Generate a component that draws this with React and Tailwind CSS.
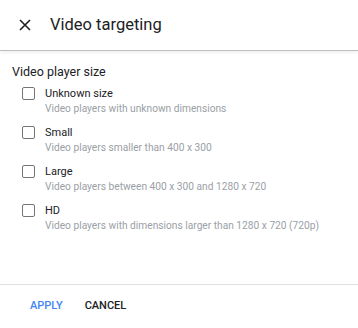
import React from 'react';

const options = [
    { label: 'Unknown size', desc: 'Video players with unknown dimensions' },
    { label: 'Small', desc: 'Video players smaller than 400 x 300' },
    { label: 'Large', desc: 'Video players between 400 x 300 and 1280 x 720' },
    { label: 'HD', desc: 'Video players with dimensions larger than 1280 x 720 (720p)' },
];

const App = () => {
    return (
        <div className="flex flex-col h-[328px] w-[358px] bg-white font-['Roboto',sans-serif] text-[#202124]">
            {/* Header */}
            <div className="flex items-center h-[51px] shrink-0 border-b border-[#bdbdbd] shadow-[0_2px_3px_rgba(0,0,0,0.06)]">
                <svg className="ml-[19px] w-3 h-3" viewBox="0 0 12 12" fill="none" stroke="#202124" strokeWidth="1.6">
                    <path d="M1 1L11 11M11 1L1 11" />
                </svg>
                <h1 className="ml-[19px] text-[16.5px] leading-none">Video targeting</h1>
            </div>

            {/* Body */}
            <div className="flex-1 pt-[13px]">
                <p className="pl-3 text-[12.5px] leading-4">Video player size</p>
                <div className="mt-[6px] flex flex-col gap-[9px] pl-[22px]">
                    {options.map(o => (
                        <div key={o.label} className="flex items-start gap-[10px]">
                            <div className="mt-[1px] w-[13px] h-[13px] shrink-0 rounded-[2px] border-[1.5px] border-[#757575]" />
                            <div>
                                <p className="text-[11px] leading-[15px]">{o.label}</p>
                                <p className="text-[10.2px] leading-[15px] text-[#9aa0a6]">{o.desc}</p>
                            </div>
                        </div>
                    ))}
                </div>
            </div>

            {/* Footer */}
            <div className="h-[44px] shrink-0 border-t border-[#e0e0e0] flex items-start pt-[14px] pl-[30px] gap-[22px] text-[11px] leading-[14px] font-medium">
                <button className="text-[#4285f4]">APPLY</button>
                <button className="text-[#202124]">CANCEL</button>
            </div>
        </div>
    );
};

export default App;
